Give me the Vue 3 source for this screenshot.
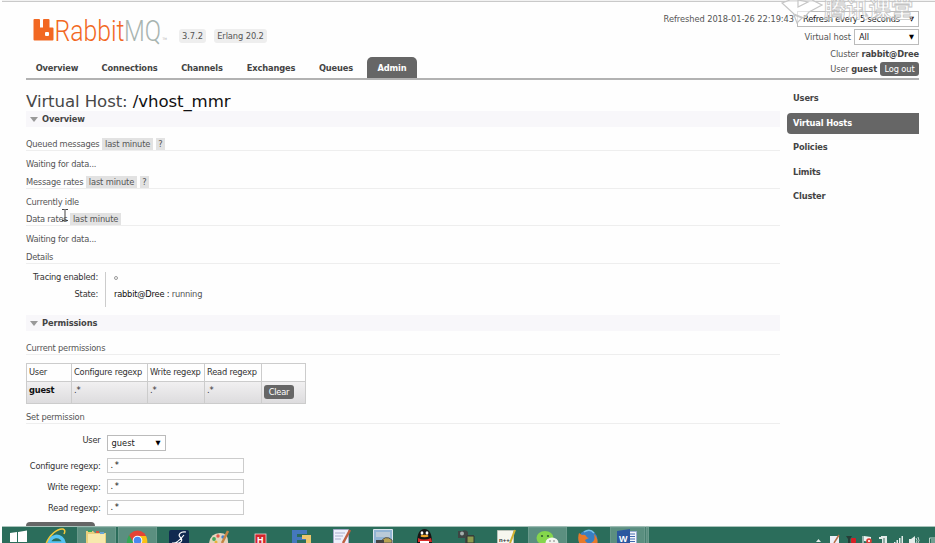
<script setup>
const tabs = [
  { label: 'Overview', w: 62 },
  { label: 'Connections', w: 83 },
  { label: 'Channels', w: 62 },
  { label: 'Exchanges', w: 76 },
  { label: 'Queues', w: 54 },
  { label: 'Admin', w: 50, active: true },
]
const side = ['Users', 'Virtual Hosts', 'Policies', 'Limits', 'Cluster']
const stats = [
  { title: 'Queued messages', help: true, body: 'Waiting for data...' },
  { title: 'Message rates', help: true, body: 'Currently idle' },
  { title: 'Data rates', help: false, body: 'Waiting for data...' },
]
const fields = ['Configure regexp:', 'Write regexp:', 'Read regexp:']
</script>

<template>
  <div class="screen">
    <div class="page">
      <header>
        <div class="brand">
          <svg class="logo" width="140" height="28" viewBox="0 0 140 28">
            <path fill="#f26822" d="M1.500 1H6Q7 1 7 2V9.500H10V2Q10 1 11 1H15.500Q16.500 1 16.500 2V9.500H19.500Q20.500 9.500 20.500 10.500V21.500Q20.500 22.500 19.500 22.500H1.500Q.5 22.500 .5 21.500V2Q.5 1 1.500 1Z" />
            <rect x="12" y="14" width="4" height="4" rx="1" fill="#fff" />
            <text x="21.500" y="22.500" textLength="70" lengthAdjust="spacingAndGlyphs" class="rabbit">Rabbit</text>
            <text x="91" y="22.500" textLength="37" lengthAdjust="spacingAndGlyphs" class="mq">MQ</text>
            <text x="129.500" y="22" class="tm">TM</text>
          </svg>
          <span class="ver v1">3.7.2</span>
          <span class="ver v2">Erlang 20.2</span>
        </div>
        <nav>
          <a v-for="t in tabs" :key="t.label" :class="{ active: t.active }" :style="{ width: t.w + 'px' }">{{ t.label }}</a>
        </nav>
        <div class="status">
          <div class="srow r1"><span class="time">Refreshed 2018-01-26 22:19:43</span><span class="select refresh">Refresh every 5 seconds<i>▼</i></span></div>
          <div class="srow r2"><span>Virtual host</span><span class="select vhost">All<i>▼</i></span></div>
          <div class="srow r3"><span>Cluster <b>rabbit@Dree</b></span></div>
          <div class="srow r4"><span>User <b>guest</b></span><span class="btn logout">Log out</span></div>
        </div>
      </header>

      <div class="content">
        <main>
          <h1>Virtual Host: <b>/vhost_mmr</b></h1>
          <h2><svg width="8" height="5"><path d="M0 0h8L4 5z" fill="#999" /></svg>Overview</h2>
          <div class="stats">
            <section v-for="(s, i) in stats" :key="i">
              <h3><span>{{ s.title }}</span><em>last minute</em><em v-if="s.help" class="q">?</em></h3>
              <p>{{ s.body }}</p>
            </section>
          </div>
          <h3 class="plain">Details</h3>
          <dl>
            <dt>Tracing enabled:</dt><dd><i class="dot"></i></dd>
            <dt>State:</dt><dd><b>rabbit@Dree :</b> running</dd>
          </dl>
          <h2><svg width="8" height="5"><path d="M0 0h8L4 5z" fill="#999" /></svg>Permissions</h2>
          <h3 class="plain current">Current permissions</h3>
          <div class="table">
            <div class="tr head"><span>User</span><span>Configure regexp</span><span>Write regexp</span><span>Read regexp</span><span></span></div>
            <div class="tr body"><span><b>guest</b></span><span>.*</span><span>.*</span><span>.*</span><span><a class="btn clear">Clear</a></span></div>
          </div>
          <h3 class="plain set">Set permission</h3>
          <form>
            <div class="field user"><label>User</label><span class="select guest">guest<i>▼</i></span></div>
            <div v-for="f in fields" :key="f" class="field"><label>{{ f }}</label><span class="input">.*</span></div>
          </form>
          <div class="submit"></div>
        </main>
        <aside>
          <a v-for="s in side" :key="s" :class="{ active: s === 'Virtual Hosts' }">{{ s }}</a>
        </aside>
      </div>
    </div>

    <svg class="mark" width="135" height="26" viewBox="0 0 135 26">
      <g fill="#fff" fill-opacity=".6" stroke="#c6c6c6" stroke-width="1.200">
        <path d="M2 3 10 0H32L42 5 29 12 24 18 14 14Z" />
        <path d="M18 0v7l10-5z" />
        <path d="M14 15l8 3-5 5z" />
      </g>
      <text x="44" y="17" textLength="89" class="cn">腾讯课堂</text>
    </svg>

    <svg class="cursor" width="8" height="12" viewBox="0 0 8 12"><path d="M1 .5H3.500L4 1 4.500.5H7M4 1V11M1 11.500H3.500L4 11 4.500 11.500H7" fill="none" stroke="#444" /></svg>

    <svg class="taskbar" width="933" height="17" viewBox="2 526 933 17">
      <path fill="#2b6d5b" d="M2 527h933v16H2z" />
      <path fill="#a9c3bb" d="M2 526h933v1H2z" />
      <g fill="#5b8f80" stroke="#86aca1" stroke-width=".6">
        <path d="M77.500 527h38v18h-38zM118.500 527h38v18h-38zM528.500 527h38v18h-38zM610.500 527h34v18h-34zM646 527h2.500v18H646z" />
      </g>
      <path fill="#fff" d="M10 533l7-1v10h-7zM18 532l9-1.500V542h-9zM10 543h17v2H10z" />
      <g fill="none">
        <path d="M49 545a7.500 7.500 0 1 1 15-2H51" stroke="#55c4f3" stroke-width="3.600" />
        <path d="M46 544c3-9 12-16 17-15q3 1 1 5" stroke="#f4c93b" stroke-width="1.500" />
      </g>
      <path fill="#e9cf7c" d="M86 531h7l2 2h11v12H86z" /><path fill="#f7e9ad" d="M88 534h17v9H88z" />
      <path fill="#3da35d" d="M88 530h4v2h-4z" /><path fill="#d9523f" d="M96 531h3v2h-3z" /><path fill="#6aa5d8" d="M100 532h4v2h-4z" />
      <circle cx="137.500" cy="540" r="9.500" fill="#e54335" />
      <path fill="#34a853" d="M129 535l5 8v4h-7q-1-7 2-12z" /><path fill="#fbc116" d="M138 536h8q2 4 1 9h-7z" />
      <circle cx="137.500" cy="540.500" r="4.800" fill="#fff" /><circle cx="137.500" cy="540.500" r="3.800" fill="#4a88ef" />
      <rect x="169" y="530" width="20" height="16" rx="2" fill="#102a50" />
      <path d="M186 532c-6-1-8 3-6 5s3 4-1 6h-7c4 1 8-3 12-8" fill="none" stroke="#fff" stroke-width="1.200" />
      <path fill="#e5d5bd" d="M209 544q1-11 11-11 9 0 8 11z" />
      <circle cx="214" cy="539" r="1.900" fill="#42a75c" /><circle cx="218" cy="536" r="1.700" fill="#e2574a" /><circle cx="223" cy="537" r="1.700" fill="#3e82d0" /><circle cx="216" cy="542" r="1.500" fill="#e7b43b" />
      <path d="M228 531l-6 12" stroke="#c78646" stroke-width="2.500" />
      <rect x="255" y="534" width="11" height="11" fill="#d4242b" stroke="#f1d5d5" stroke-width=".8" /><text x="257" y="542.800" class="ic">H</text>
      <path fill="#4478bd" d="M292 530h15v4h-10v3h9v3h-9v5h-5z" /><path fill="#ecc66f" d="M302 535h9v10h-5v-6h-4z" />
      <path fill="#eef0fb" stroke="#a4a9c6" d="M333.500 529.500h15V545h-15z" /><path d="M335 533h10M335 536h8M335 539h6" stroke="#a8aecb" /><path d="M350 530l-7 13" stroke="#be6042" stroke-width="2.500" />
      <path fill="#92b4d4" stroke="#dce5ed" d="M373.500 529.500h19V545h-19z" /><path fill="#b9cad8" d="M376 532h14v5h-14z" /><path d="M380 543q5-9 12-3v3z" fill="#b8a253" stroke="#555" /><path fill="#444" d="M376 540h8v3h-8z" />
      <path fill="#151515" d="M417 543q0-14 7.500-14t7.500 14z" /><ellipse cx="422" cy="533" rx="1.400" ry="1.800" fill="#fff" /><ellipse cx="427" cy="533" rx="1.400" ry="1.800" fill="#fff" /><ellipse cx="424.500" cy="536" rx="4" ry="1.200" fill="#eca329" /><path fill="#da2d2b" d="M418 538q6 3 13 0l1 4h-14z" /><path fill="#fff" d="M420 541h9v3h-9z" />
      <path fill="#3e4644" d="M458 531h4q4-2 6 1v3h6v8h-9v-5h-7z" /><path fill="#8e9c50" stroke="#2d3733" d="M467 536h7v7h-7z" /><circle cx="462" cy="533.500" r="2" fill="#a5afae" />
      <path fill="#f6f6ef" stroke="#bbc3ba" d="M497.500 530.500h16V545h-16z" /><text x="499" y="542" class="np">n++</text><path d="M515 530l-5 13" stroke="#d3b12f" stroke-width="2" />
      <ellipse cx="545" cy="538" rx="8.500" ry="7" fill="#85d64c" /><circle cx="542" cy="536" r="1.100" fill="#315f32" /><circle cx="548" cy="536" r="1.100" fill="#315f32" /><ellipse cx="552" cy="543" rx="6.500" ry="5.500" fill="#f2f5ef" /><circle cx="550" cy="541" r=".8" fill="#777" /><circle cx="554" cy="541" r=".8" fill="#777" />
      <circle cx="588" cy="539.500" r="9.500" fill="#397fc3" /><path fill="#e8792a" d="M579 533l3 2q3-1 4 1 1 2 3 2l-4 2q1 4 6 3 5-2 3-9 5 5 3 11H580q-3-6-1-12z" /><path d="M584 532q6-4 10 1" fill="none" stroke="#79c1ea" stroke-width="1.500" />
      <path fill="#f5f7fb" stroke="#9aafd2" d="M627.500 531.500h9V545h-9z" /><path d="M629 534h6M629 536.500h6M629 539h6M629 541.500h6" stroke="#416ab0" /><path fill="#2b579f" d="M617 531l13-2v16h-13z" /><text x="619" y="542" class="word">W</text>
      <path fill="#e4ece9" d="M816 542l2.500-3 2.500 3z" />
      <path fill="#eef0f8" d="M830 536h9v8h-9z" /><path d="M839 535l-5 8" stroke="#b96d46" stroke-width="1.500" />
      <path fill="#263c36" d="M846 536h6l-2 3v4h-2v-4z" /><rect x="851" y="538" width="5" height="5" rx="1" fill="#d81f25" />
      <path d="M863 536v8" stroke="#fff" /><path fill="#eef4f2" d="M864 536l7 1v5l-7-1z" /><circle cx="869" cy="541" r="2.800" fill="#db3b35" /><path d="M868 540l2 2m0-2-2 2" stroke="#fff" stroke-width=".8" />
      <path fill="#e2ebe8" d="M881 536h6v8h-5v-5h-3v-2h2z" /><path fill="#91aca4" d="M883 538h2v5h-2z" />
      <path fill="#e5eeeb" d="M894 542h1.500v2H894zM896.500 540h1.500v4h-1.500zM899 538h1.500v6H899zM901.500 536h1.500v8h-1.500z" />
      <path fill="#e5eeeb" d="M909 539h2l4-3v8h-6z" /><path d="M916 538q2 3 0 5M918 537q2 4 0 6" fill="none" stroke="#e5eeeb" stroke-width=".8" />
      <path d="M929.500 545v-7h6M931 540h4M931 542h4" fill="none" stroke="#bad2c9" />
    </svg>
  </div>
</template>

<style>
body { margin: 0; background: #fdfdfd; overflow: hidden; }
</style>
<style scoped>
* { box-sizing: border-box; }
.screen { position: relative; width: 935px; height: 543px; overflow: hidden; background: #fefefe; font: 8.3px/12px "DejaVu Sans", sans-serif; letter-spacing: -.22px; color: #555; }
.page { width: 933px; height: 527px; margin-left: 2px; border-top: 1px solid #f2f2f2; overflow: hidden; }
.page::before { content: ''; display: block; height: 1px; background: #c9c9c9; }
h1, h2, h3, p, dl, dd { margin: 0; font-weight: normal; }
i, em { font-style: normal; }
header { height: 78px; margin: 0 16px 0 24px; border-bottom: 2px solid #b2b2b2; display: grid; grid-template: 55px 21px / 1fr 262px; }
.brand { display: flex; padding: 16px 0 0 7px; }
.logo { flex: none; letter-spacing: 0; overflow: visible; }
.rabbit, .mq { font: 300 29px Roboto, sans-serif; fill: #f26822; }
.mq { fill: #a8b4b0; }
.tm { font-size: 3px; fill: #aaa; }
.ver { height: 14px; margin-top: 11px; text-align: center; line-height: 15px; border-radius: 3px; background: #eee; white-space: nowrap; }
.v1 { margin-left: 6px; width: 27px; letter-spacing: 0; }
.v2 { margin-left: 8px; width: 53px; letter-spacing: -.1px; }
nav { grid-row: 2; display: flex; white-space: nowrap; letter-spacing: -.14px; }
nav a { text-align: center; font-weight: bold; line-height: 22px; color: #444; }
nav a.active { color: #fff; background: #666; border-radius: 5px 5px 0 0; margin-left: 4px; }
.status { grid-column: 2; grid-row: 1 / 3; display: flex; flex-direction: column; align-items: flex-end; padding-top: 9px; white-space: nowrap; }
.srow { display: flex; align-items: center; gap: 3px; }
.time { letter-spacing: -.07px; }
.r1 { height: 16px; } .r2 { height: 16px; margin-top: 2px; letter-spacing: -.1px; } .r3 { height: 14px; margin-top: 2px; letter-spacing: -.12px; } .r4 { height: 15px; letter-spacing: -.12px; }
b { color: #444; }
.select { display: flex; justify-content: space-between; align-items: center; border: 1px solid #bbb; background: #fff; color: #222; height: 16px; padding: 0 4px; }
.select i { font-size: 6.500px; color: #000; letter-spacing: 0; }
.refresh { width: 122px; padding-left: 5px; } .vhost { width: 65px; }
.btn { background: #666; color: #fff; border-radius: 3px; display: block; text-align: center; }
.logout { width: 39px; height: 14px; line-height: 14px; }
.content { display: flex; justify-content: space-between; padding: 0 16px 0 24px; }
main { width: 754px; }
h1 { height: 31px; padding-top: 11px; font-size: 16.600px; line-height: 22px; letter-spacing: -.1px; color: #484848; white-space: nowrap; }
h1 b { font-weight: normal; color: #111; }
h2 { height: 16px; display: flex; align-items: center; gap: 4px; padding-left: 4px; background: #f8f7fa; font-size: 8.3px; letter-spacing: -.12px; font-weight: bold; color: #444; }
.stats { padding-top: 11px; }
h3 { height: 13px; display: flex; gap: 3px; font-size: 8.3px; line-height: 12px; border-bottom: 1px solid #eee; }
em { background: #e2e2e2; padding: 0 2.500px; height: 12px; letter-spacing: -.14px; }
p { height: 24.700px; padding-top: 7px; }
dl { display: grid; grid-template: 17px 18px / 79px 1fr; margin-top: 8px; height: 35px; line-height: 10px; }
dt { text-align: right; color: #333; padding-right: 7px; }
dd { border-left: 1px solid #ccc; padding-left: 8px; }
dd b { font-weight: normal; color: #111; }
.dot { display: block; width: 4px; height: 4px; border: 1px solid #999; border-radius: 2px; margin-top: 4px; }
dl + h2 { margin-top: 8px; }
.current { margin-top: 11px; }
.table { width: 280px; margin-top: 8px; border: 1px solid #ccc; height: 41px; color: #333; }
.tr { display: grid; grid-template-columns: 44px 76px 57px 57px 1fr; }
.head { height: 17px; line-height: 16px; }
.body { height: 22px; line-height: 16px; border-top: 1px solid #ccc; background: linear-gradient(#f1f0f1, #dddcde); }
.body b { color: #111; }
.tr span { padding-left: 2px; border-left: 1px solid #ccc; white-space: nowrap; }
.tr span:first-child { border: 0; }
.clear { width: 30px; height: 14px; margin-top: 3px; line-height: 14px; }
.set { margin-top: 7px; }
form { padding-top: 11px; }
.field { height: 15px; margin-bottom: 6px; display: flex; gap: 6px; }
.field label { width: 74.500px; text-align: right; color: #333; line-height: 16px; white-space: nowrap; }
.user { height: 16px; margin-bottom: 7px; } .user label { line-height: 11px; }
.guest { width: 59px; letter-spacing: 0; }
.input { width: 137px; border: 1px solid #ccc; padding-left: 3px; line-height: 13px; color: #111; letter-spacing: 1.500px; }
.submit { width: 69px; height: 14px; border-radius: 4px; background: #666; margin-top: 7px; }
aside { width: 132px; padding-top: 8px; display: flex; flex-direction: column; gap: 3.500px; }
aside a { height: 21px; padding-left: 6px; line-height: 21px; font-weight: bold; letter-spacing: -.15px; color: #444; }
aside a.active { background: #666; color: #fff; border-radius: 4px 0 0 4px; }
.mark { position: absolute; left: 780px; top: 0; letter-spacing: 0; }
.cn { font: bold 22px "Noto Sans CJK SC", sans-serif; fill: rgba(255, 255, 255, .4); stroke: #c4c4c4; stroke-width: .8; }
.cursor { position: absolute; left: 61px; top: 209px; }
.taskbar { position: absolute; left: 2px; top: 526px; letter-spacing: 0; }
.ic { font: bold 9px "Liberation Sans", sans-serif; fill: #fff; }
.np { font: bold 6px "Liberation Sans", sans-serif; fill: #333; }
.word { font: bold 9px "Liberation Sans", sans-serif; fill: #fff; }
</style>
